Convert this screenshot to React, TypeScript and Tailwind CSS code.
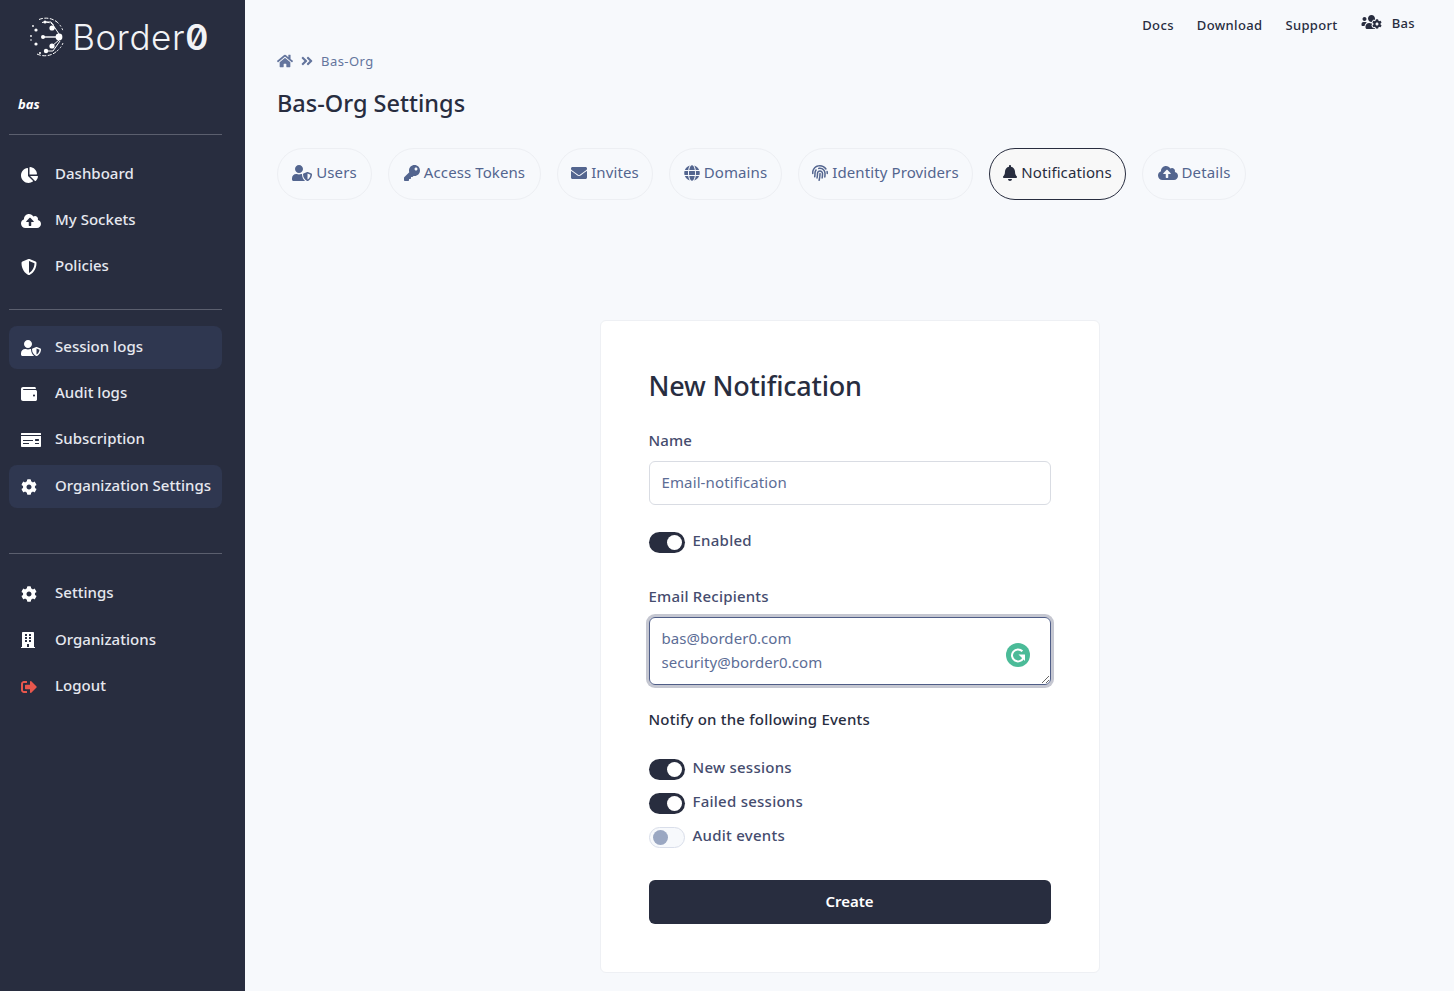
import { FC, ReactNode } from "react";
import { IconType } from "react-icons";
import {
  FaAngleDoubleRight,
  FaBell,
  FaBuilding,
  FaChartPie,
  FaCloudUploadAlt,
  FaCog,
  FaEnvelope,
  FaFingerprint,
  FaGlobe,
  FaHome,
  FaKey,
  FaMoneyCheck,
  FaShieldAlt,
  FaSignOutAlt,
  FaUserShield,
  FaUsersCog,
  FaWallet,
} from "react-icons/fa";

const font = { fontFamily: '"Noto Sans", sans-serif' };

const NavItem: FC<{ icon: IconType; label: string; active?: boolean; iconClass: string }> = ({
  icon: Icon,
  label,
  active,
  iconClass,
}) => (
  <div
    className={`flex h-[43px] items-center rounded-lg pl-3 text-[15px] font-medium tracking-[0.02px] text-[#e6e8ef] ${
      active ? "bg-[#2f3750]" : ""
    }`}
  >
    <span className="flex w-[34px] shrink-0">
      <Icon className={iconClass} />
    </span>
    <span className="-mt-[2px]">{label}</span>
  </div>
);

const Tab: FC<{
  icon: IconType;
  label: string;
  active?: boolean;
  iconClass: string;
  widthClass: string;
}> = ({ icon: Icon, label, active, iconClass, widthClass }) => (
  <div
    className={`flex h-[52px] items-center justify-center gap-1 rounded-[26px] border pb-[3px] text-[15px] tracking-[0.1px] ${widthClass} ${
      active
        ? "border-[#282d3f] bg-[#f8f8f8] text-[#282d3f]"
        : "border-[#edeff3] text-[#53658f]"
    }`}
  >
    <Icon className={iconClass} />
    {label}
  </div>
);

const Toggle: FC<{ on?: boolean; children: ReactNode }> = ({ on, children }) => (
  <div className="flex items-center gap-2">
    <span
      className={`flex h-[21px] w-9 items-center rounded-full ${
        on
          ? "justify-end bg-[#282d3f] pr-[3px]"
          : "justify-start border border-[#d9deea] bg-[#f7f9fc] pl-[3px]"
      }`}
    >
      <span className={`h-[15px] w-[15px] rounded-full ${on ? "bg-white" : "bg-[#9aa7c2]"}`} />
    </span>
    <span className="-mt-[4px] text-[15px] font-medium tracking-[0.25px] text-[#454c6e]">
      {children}
    </span>
  </div>
);

const Logo: FC = () => (
  <div className="flex h-[74px] items-center justify-center pr-[9px]">
    <svg width="38" height="40" viewBox="0 0 38 40" className="text-white">
      <g fill="none" stroke="currentColor" strokeWidth="1">
        <path d="M12 2.5 A18 18 0 0 1 30 5" strokeDasharray="4 1.5" />
        <path d="M15 5.5 A15 15 0 0 1 27 8" strokeDasharray="3 1.5" />
        <path d="M10 37 A18 18 0 0 0 30 34" strokeDasharray="4 1.5" />
        <path d="M30 5 A19 19 0 0 1 36 14" strokeDasharray="2 2" />
        <path d="M30 34 A19 19 0 0 0 36 26" strokeDasharray="2 2" />
        <path d="M16 20 H33" strokeWidth="1.4" />
        <path d="M18 5 H24 L32 17 M25 11 L28 11 M25 29 L32 23 M19 34 H26 L33 24" />
      </g>
      <g fill="currentColor">
        <circle cx="32" cy="20" r="3.4" />
        <circle cx="25" cy="11" r="2.6" />
        <circle cx="25" cy="29" r="2.6" />
        <circle cx="19" cy="34" r="2.2" />
        <circle cx="18" cy="5" r="1.6" />
        <circle cx="16" cy="20" r="2" />
        <circle cx="9" cy="13" r="1.6" />
        <circle cx="9" cy="27" r="1.6" />
        <circle cx="4" cy="19" r="0.9" />
        <circle cx="4" cy="23" r="0.8" />
        <circle cx="6" cy="9" r="0.9" />
        <circle cx="13" cy="36" r="1" />
      </g>
    </svg>
    <span
      className="ml-[7px] text-[35px] font-light leading-none tracking-[0.6px] text-[#f2f3f6]"
      style={{ fontFamily: "Inter, sans-serif" }}
    >
      Border<span className="slashed-zero font-semibold">0</span>
    </span>
  </div>
);

const Sidebar: FC = () => (
  <aside className="flex w-[245px] shrink-0 flex-col bg-[#282d3f]">
    <Logo />
    <div className="pl-[9px] pr-[23px]">
      <p className="mt-[20px] pl-[9px] text-[13px] font-bold italic leading-5 text-white">bas</p>
      <hr className="mt-[20px] border-[#5b5f6e]" />
      <nav className="mt-[18px] flex flex-col gap-[3px]">
        <NavItem icon={FaChartPie} label="Dashboard" iconClass="h-4 w-[17px] text-white" />
        <NavItem icon={FaCloudUploadAlt} label="My Sockets" iconClass="h-4 w-5 text-white" />
        <NavItem icon={FaShieldAlt} label="Policies" iconClass="h-4 w-4 text-white" />
      </nav>
      <hr className="mt-[21px] border-[#5b5f6e]" />
      <nav className="mt-4 flex flex-col gap-[3px]">
        <NavItem icon={FaUserShield} label="Session logs" active iconClass="h-4 w-5 text-white" />
        <NavItem icon={FaWallet} label="Audit logs" iconClass="h-4 w-4 text-white" />
        <NavItem icon={FaMoneyCheck} label="Subscription" iconClass="h-4 w-5 text-white" />
        <div className="mt-[1px]">
          <NavItem icon={FaCog} label="Organization Settings" active iconClass="h-4 w-4 text-white" />
        </div>
      </nav>
      <hr className="mt-[45px] border-[#5b5f6e]" />
      <nav className="mt-[18px] flex flex-col gap-[3.5px]">
        <NavItem icon={FaCog} label="Settings" iconClass="h-4 w-4 text-white" />
        <NavItem icon={FaBuilding} label="Organizations" iconClass="h-4 w-[14px] text-white" />
        <NavItem icon={FaSignOutAlt} label="Logout" iconClass="h-4 w-4 text-[#e8574d]" />
      </nav>
    </div>
  </aside>
);

const Card: FC = () => (
  <div className="mx-auto mt-[120px] w-[500px] rounded-md border border-[#eef0f4] bg-white px-12 pb-12 pt-[45px]">
    <h2 className="text-[27px] font-medium leading-10 tracking-[-0.2px] text-[#282d3f]">
      New Notification
    </h2>
    <label className="mt-[24px] block text-[15px] font-medium leading-5 tracking-[0.1px] text-[#454c6e]">
      Name
    </label>
    <input
      readOnly
      value="Email-notification"
      className="mt-[11px] block h-[44px] w-full rounded-md border border-[#d9dce3] px-3 pb-[2px] text-[15px] tracking-[0.12px] text-[#5c6d96] outline-none"
    />
    <div className="mt-[27px]">
      <Toggle on>Enabled</Toggle>
    </div>
    <label className="mt-[33px] block text-[15px] font-medium leading-5 tracking-[0.2px] text-[#454c6e]">
      Email Recipients
    </label>
    <div className="relative mt-[11px]">
      <textarea
        readOnly
        value={"bas@border0.com\nsecurity@border0.com"}
        className="block h-[68px] w-full rounded-md border border-[#4f5d87] px-3 py-2 text-[15px] leading-6 tracking-[0.05px] text-[#5c6d96] outline-none ring-3 ring-[#c5c7d1]"
      />
      <svg
        width="24"
        height="24"
        viewBox="0 0 24 24"
        className="absolute right-[21px] top-[26px]"
      >
        <circle cx="12" cy="12" r="12" fill="#4bbb98" />
        <path
          d="M16.4 8.3A6 6 0 1 0 17.4 15"
          fill="none"
          stroke="#fff"
          strokeWidth="2"
        />
        <path d="M12.5 11.5h6.5v6.5z" fill="#fff" />
      </svg>
    </div>
    <p className="mt-[24px] text-[15px] font-medium leading-5 tracking-[0.2px] text-[#282d3f]">
      Notify on the following Events
    </p>
    <div className="mt-[30px] flex flex-col gap-[13px]">
      <Toggle on>New sessions</Toggle>
      <Toggle on>Failed sessions</Toggle>
      <Toggle>Audit events</Toggle>
    </div>
    <button className="mt-[32px] h-[44px] w-full rounded-md bg-[#282d3f] pb-[2px] text-[15px] font-semibold text-white">
      Create
    </button>
  </div>
);

const App: FC = () => {
  return (
    <div className="flex h-screen overflow-hidden bg-[#f7f9fc]" style={font}>
      <Sidebar />
      <main className="flex-1 px-8">
        <div className="flex items-start justify-end gap-[23px] pr-[7px] pt-4 text-[13px] font-medium leading-[18px] tracking-[0.35px] text-[#282d3f]">
          <span>Docs</span>
          <span>Download</span>
          <span>Support</span>
          <span className="-mt-[2px] flex items-center gap-[10px]">
            <FaUsersCog className="-mt-[2px] h-4 w-[21px]" />
            Bas
          </span>
        </div>
        <div className="mt-[17px] flex items-center gap-2 text-[13px] leading-5 tracking-[0.45px] text-[#64759d]">
          <FaHome className="h-4 w-4" />
          <FaAngleDoubleRight className="h-[14px] w-3" />
          <span>Bas-Org</span>
        </div>
        <h1 className="mt-[16px] text-[23.5px] font-medium leading-8 text-[#282d3f]">
          Bas-Org Settings
        </h1>
        <div className="mt-[29px] flex gap-4">
          <Tab icon={FaUserShield} label="Users" iconClass="h-4 w-5" widthClass="w-[95px]" />
          <Tab icon={FaKey} label="Access Tokens" iconClass="h-4 w-4" widthClass="w-[153px]" />
          <Tab icon={FaEnvelope} label="Invites" iconClass="h-4 w-4" widthClass="w-[96px]" />
          <Tab icon={FaGlobe} label="Domains" iconClass="h-4 w-4" widthClass="w-[113px]" />
          <Tab icon={FaFingerprint} label="Identity Providers" iconClass="h-4 w-4" widthClass="w-[175px]" />
          <Tab icon={FaBell} label="Notifications" active iconClass="h-4 w-[14px]" widthClass="w-[137px]" />
          <Tab icon={FaCloudUploadAlt} label="Details" iconClass="h-4 w-5" widthClass="w-[104px]" />
        </div>
        <Card />
      </main>
    </div>
  );
};

export default App;
